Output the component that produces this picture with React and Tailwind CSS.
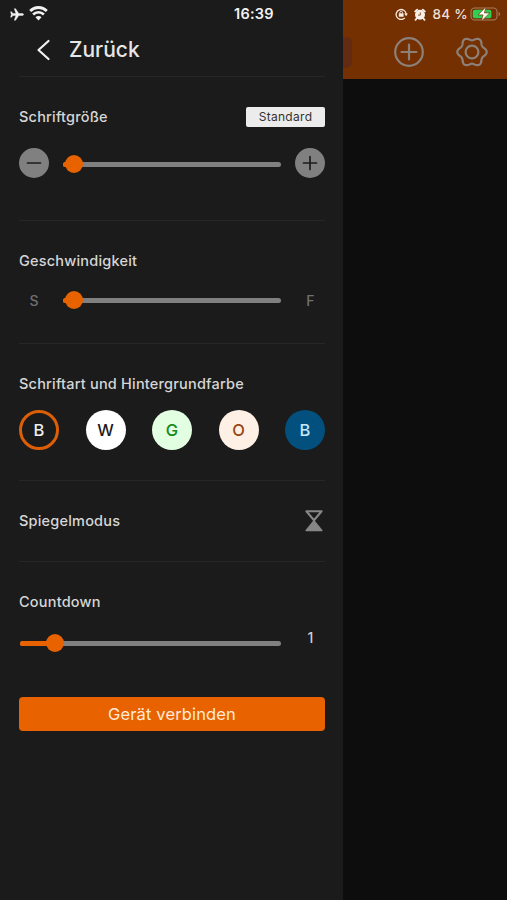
import React, { useState } from "react";

const THEMES = [
  { id: "black", letter: "B", className: "bg-[#1b1b1b] text-[#efefef]" },
  { id: "white", letter: "W", className: "bg-white text-[#1b1b1b]" },
  { id: "green", letter: "G", className: "bg-[#e2ffe2] text-[#128a1c]" },
  { id: "orange", letter: "O", className: "bg-[#fff0e6] text-[#9c4411]" },
  { id: "blue", letter: "B", className: "bg-[#03507f] text-[#c4e8ff]" },
];

// six soft lobes around the centre of a 32x30 box
const GEAR_POINTS = Array.from({ length: 120 }, (_, i) => {
  const angle = (i / 120) * Math.PI * 2;
  const radius = 13.2 + 1.5 * Math.cos(6 * angle);
  return `${(16 + radius * Math.cos(angle)).toFixed(2)},${(15 + radius * Math.sin(angle)).toFixed(2)}`;
}).join(" ");

function PlaneIcon() {
  return (
    <svg width="14" height="13" viewBox="0 0 14 13" fill="#f2f2f2" stroke="#f2f2f2" strokeWidth=".4">
      <path d="M13.6 6.5c0-.7-.8-1-1.7-1H8.8L5.6.7H4.3l1.6 4.8H2.9L1.6 3.8H.6l.7 2.7-.7 2.7h1l1.3-1.7h3L4.3 12.3h1.3l3.2-4.8h3.1c.9 0 1.7-.3 1.7-1z" />
    </svg>
  );
}

function WifiIcon() {
  return (
    <svg width="19" height="15" viewBox="0 0 19 15" fill="none" stroke="#f2f2f2">
      <path d="M1.2 4.9a11.8 11.8 0 0 1 16.6 0" strokeWidth="2.8" />
      <path d="M4.1 8.5a7.6 7.6 0 0 1 10.8 0" strokeWidth="2.6" />
      <path d="M9.5 14.4 6.5 11.2a4.2 4.2 0 0 1 6 0z" fill="#f2f2f2" stroke="none" />
    </svg>
  );
}

function RotationLockIcon() {
  return (
    <svg width="13" height="12" viewBox="0 0 13 12" fill="none" stroke="#f5e9e0">
      <path d="M9.8 9.9A5 5 0 1 1 11.1 6" strokeWidth="1.3" />
      <path d="M9.2 5.6h3.7L11.1 8.2z" fill="#f5e9e0" stroke="none" />
      <rect x="3.8" y="5.2" width="4.8" height="3.5" rx=".5" fill="#f5e9e0" stroke="none" />
      <path d="M4.9 5.4v-.8a1.3 1.3 0 0 1 2.6 0v.8" strokeWidth="1" />
    </svg>
  );
}

function AlarmIcon() {
  return (
    <svg width="12" height="13" viewBox="0 0 12 13">
      <circle cx="6" cy="6.8" r="5" fill="#f8efe8" />
      <path d="M1.2 3.4 3.2 1.6M10.8 3.4 8.8 1.6M2.4 10.8l-.9 1.1M9.6 10.8l.9 1.1" stroke="#f8efe8" strokeWidth="1.8" strokeLinecap="round" />
      <path d="M6.3 4.4v2.7H4" fill="none" stroke="#743000" strokeWidth=".8" />
    </svg>
  );
}

function BatteryIcon() {
  return (
    <svg width="31" height="16" viewBox="0 0 31 16">
      <rect x="1" y="2" width="26" height="12" rx="3.6" fill="none" stroke="#a97c5f" strokeWidth="1.1" />
      <path d="M28.6 6v4c.9-.3 1.5-1 1.5-2s-.6-1.7-1.5-2z" fill="#a97c5f" />
      <rect x="2.8" y="3.8" width="18.6" height="8.4" rx="2" fill="#30cf54" />
      <path d="M16.2.6 8 8.9h5.1l-2 6.5 8.7-8.5h-5.4z" fill="#fff" stroke="#743000" strokeWidth=".7" />
    </svg>
  );
}

function GearIcon() {
  return (
    <svg width="32" height="30" viewBox="0 0 32 30" fill="none" stroke="#8c8078" strokeWidth="2.2" strokeLinejoin="round">
      <polygon points={GEAR_POINTS} />
      <circle cx="16" cy="15" r="6.4" />
    </svg>
  );
}

function HourglassIcon() {
  return (
    <svg width="18" height="22" viewBox="0 0 18 22">
      <path d="M1.4 1.3h15.2L9 10.2z" fill="none" stroke="#868686" strokeWidth="2.1" strokeLinejoin="round" />
      <path d="M9 11 16.8 20.5H1.2z" fill="#868686" stroke="#868686" strokeWidth="1.6" strokeLinejoin="round" />
    </svg>
  );
}

function Slider({ value }) {
  return (
    <div className="relative h-[5px] w-full rounded-full bg-[#808080]">
      <div className="h-full rounded-full bg-[#e86200]" style={{ width: value }} />
      <div
        className="absolute -top-[6.5px] size-[18px] -translate-x-1/2 rounded-full bg-[#e86200]"
        style={{ left: value }}
      />
    </div>
  );
}

function RoundButton({ plus }) {
  return (
    <button className="flex size-[30px] shrink-0 items-center justify-center rounded-full bg-[#808080]">
      <svg width="16" height="16" viewBox="0 0 16 16" stroke="#1b1b1b" strokeWidth="1.7" strokeLinecap="round">
        <path d={plus ? "M1.5 8h13M8 1.5v13" : "M1.5 8h13"} />
      </svg>
    </button>
  );
}

function Label({ children }) {
  return <h2 className="text-[14.5px] leading-5 font-medium tracking-[0.2px] whitespace-nowrap text-[#d6d6d6]">{children}</h2>;
}

function SettingsPanel() {
  const [theme, setTheme] = useState("black");

  return (
    <aside className="flex w-[343px] shrink-0 flex-col bg-[#1b1b1b] pr-[18px] pl-[19px]">
      <header className="h-[77px] border-b border-[#262626]">
        <div className="-ml-[9px] flex h-7 items-center">
          <PlaneIcon />
          <span className="-mt-0.5 ml-[5px]"><WifiIcon /></span>
          <span className="ml-[186px] text-[14.5px] font-semibold tracking-[0.25px] text-[#f2f2f2]">16:39</span>
        </div>
        <button className="ml-[17px] flex h-11 items-center gap-[18px]">
          <svg width="15" height="22" viewBox="0 0 15 22" fill="none" stroke="#f2f2f2" strokeWidth="2.2" strokeLinecap="round" strokeLinejoin="round">
            <path d="M12.5 2 2.5 11l10 9" />
          </svg>
          <span className="text-[21px] font-medium text-[#e6e6e6]">Zurück</span>
        </button>
      </header>

      <section className="h-36 border-b border-[#262626] pt-[30px]">
        <div className="flex h-5 items-center justify-between">
          <Label>Schriftgröße</Label>
          <span className="flex h-5 w-[79px] items-center justify-center rounded-xs bg-[#ececec] text-[12px] tracking-[0.3px] text-[#333]">
            Standard
          </span>
        </div>
        <div className="mt-[21px] flex items-center gap-[14px]">
          <RoundButton />
          <div className="mt-0.5 flex-1"><Slider value="11px" /></div>
          <RoundButton plus />
        </div>
      </section>

      <section className="h-[123px] border-b border-[#262626] pt-[30px]">
        <Label>Geschwindigkeit</Label>
        <div className="mt-[14px] flex h-[30px] items-center gap-[14px] text-[14px] font-medium text-[#707070]">
          <span className="w-[30px] shrink-0 text-center">S</span>
          <Slider value="11px" />
          <span className="w-[30px] shrink-0 pl-px text-center">F</span>
        </div>
      </section>

      <section className="h-[137px] border-b border-[#262626] pt-[30px]">
        <Label>Schriftart und Hintergrundfarbe</Label>
        <div className="mt-4 flex justify-between">
          {THEMES.map((item) => (
            <button
              key={item.id}
              onClick={() => setTheme(item.id)}
              className={`flex size-10 items-center justify-center rounded-full text-[16.5px] font-medium ${item.className} ${
                theme === item.id ? "border-3 border-[#dc5f08]" : ""
              }`}
            >
              {item.letter}
            </button>
          ))}
        </div>
      </section>

      <section className="flex h-[81px] items-center justify-between border-b border-[#262626] pr-[2px] pb-px">
        <Label>Spiegelmodus</Label>
        <HourglassIcon />
      </section>

      <section className="pt-[30px]">
        <Label>Countdown</Label>
        <div className="mt-[21px] flex h-5 items-center gap-[15px] pl-px">
          <Slider value="35px" />
          <span className="-mt-3 w-[29px] shrink-0 text-center text-[14px] font-medium text-[#cfcfcf]">1</span>
        </div>
        <button className="mt-11 h-[34px] w-full rounded bg-[#e86200] text-[16.5px] tracking-[0.15px] text-[#ffeada]">
          Gerät verbinden
        </button>
      </section>
    </aside>
  );
}

export default function App() {
  return (
    <div className="flex h-[900px] w-[507px] overflow-hidden bg-[#0d0d0d] font-['Inter',sans-serif]">
      <SettingsPanel />
      <main className="flex-1">
        <div className="h-[79px] bg-[#743000]">
          <div className="flex h-7 items-center justify-end pr-[6px]">
            <RotationLockIcon />
            <span className="ml-[6px]"><AlarmIcon /></span>
            <span className="ml-[6px] text-[13.5px] font-medium tracking-[0.3px] whitespace-nowrap text-[#f0dfd3]">84 %</span>
            <span className="ml-[2px]"><BatteryIcon /></span>
          </div>
          <div className="flex h-12 items-center">
            <div className="h-[31px] w-[9px] rounded-r-md bg-[#632c12]" />
            <button className="ml-[42px]">
              <svg width="30" height="30" viewBox="0 0 30 30" fill="none" stroke="#8c8078" strokeWidth="2.2" strokeLinecap="round">
                <circle cx="15" cy="15" r="13.8" />
                <path d="M7.5 15h15M15 7.5v15" />
              </svg>
            </button>
            <button className="ml-8"><GearIcon /></button>
          </div>
        </div>
      </main>
    </div>
  );
}
